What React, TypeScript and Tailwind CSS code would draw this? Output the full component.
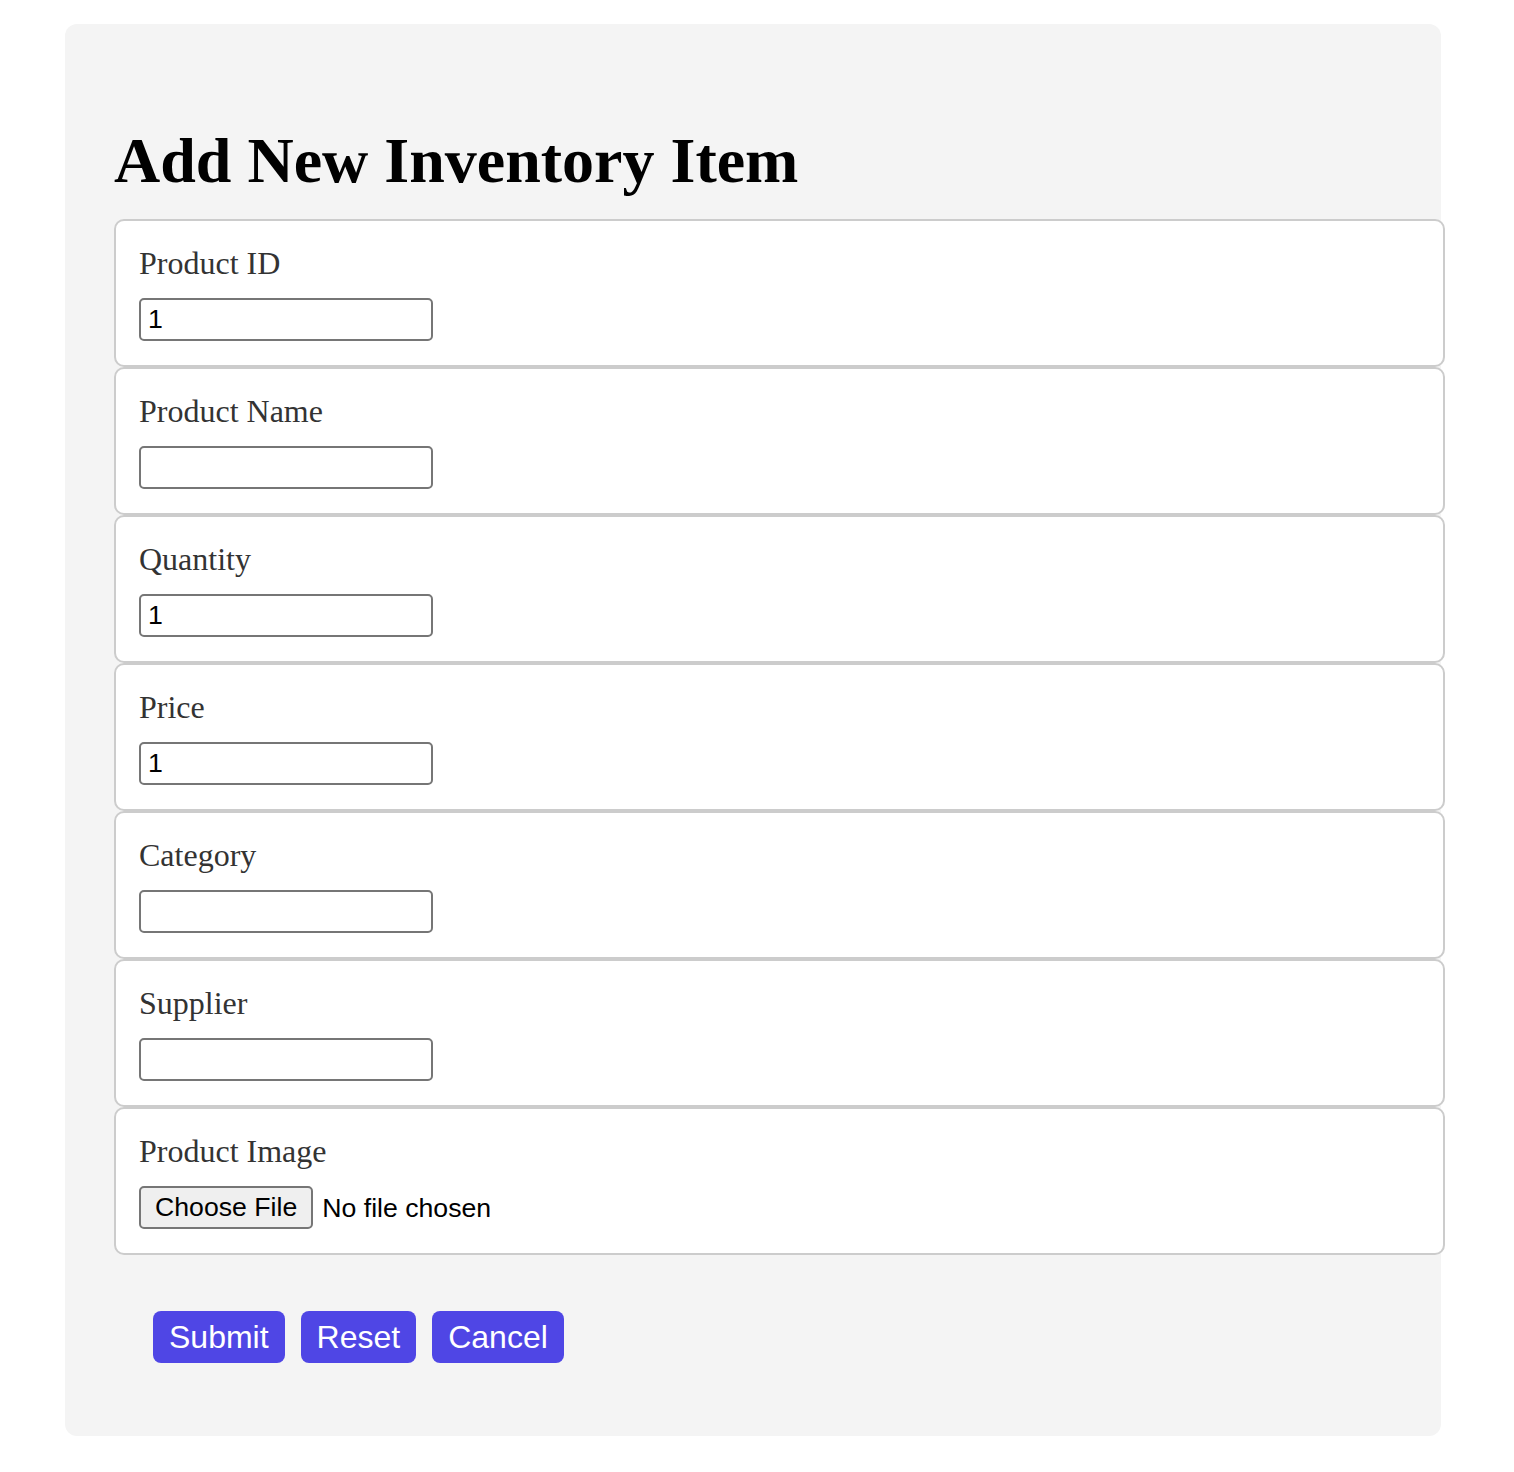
import React from 'react';

const fields = [
  { label: 'Product ID', value: '1' },
  { label: 'Product Name', value: '' },
  { label: 'Quantity', value: '1' },
  { label: 'Price', value: '1' },
  { label: 'Category', value: '' },
  { label: 'Supplier', value: '' },
];

const FieldCard: React.FC<{ label: string; children: React.ReactNode }> = ({ label, children }) => {
  return (
    <div className="w-[1331px] h-[148px] bg-white border-2 border-[#cccccc] rounded-[10px] px-[23px] pt-[24px] flex flex-col">
      <label className="block text-[32px] leading-[37px] text-[#333333] font-['Liberation_Serif',serif] mb-[16px]">
        {label}
      </label>
      {children}
    </div>
  );
};

export default function App() {
  return (
    <div className="bg-white min-h-[1472px] pt-[24px] pl-[65px]">
      <div className="w-[1376px] h-[1412px] bg-[#f4f4f4] rounded-[12px] pl-[49px] pt-[100px]">
        <h1 className="text-[64px] leading-[74px] font-bold text-black font-['Liberation_Serif',serif] mb-[21px]">
          Add New Inventory Item
        </h1>

        <div className="flex flex-col">
          {fields.map((f) => (
            <FieldCard key={f.label} label={f.label}>
              <input
                type="text"
                defaultValue={f.value}
                className="w-[294px] h-[43px] border-2 border-[#767676] rounded-[5px] bg-white px-[7px] text-[26.67px] text-black font-['Liberation_Sans',sans-serif] outline-none"
              />
            </FieldCard>
          ))}
          <FieldCard label="Product Image">
            <div className="flex items-center gap-[9px] font-['Liberation_Sans',sans-serif] text-[26.67px] text-black">
              <button className="h-[43px] px-[14px] bg-[#efefef] border-2 border-[#767676] rounded-[5px] leading-none">
                Choose File
              </button>
              <span>No file chosen</span>
            </div>
          </FieldCard>
        </div>

        <div className="flex gap-[16px] pl-[39px] pt-[56px]">
          {['Submit', 'Reset', 'Cancel'].map((b) => (
            <button
              key={b}
              className="h-[52px] px-[16px] bg-[#4f46e5] text-white rounded-[8px] text-[32px] leading-none font-['Liberation_Sans',sans-serif]"
            >
              {b}
            </button>
          ))}
        </div>
      </div>
    </div>
  );
}
